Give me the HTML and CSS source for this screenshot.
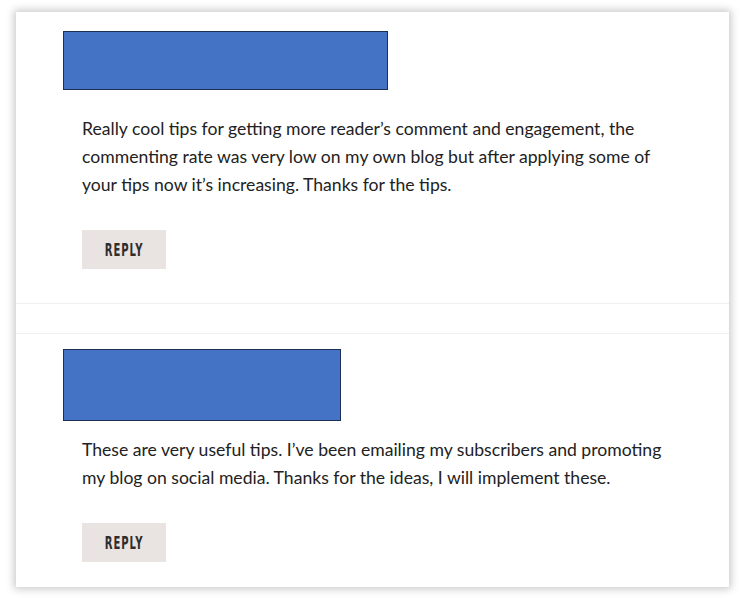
FILE: index.html
```html
<!DOCTYPE html>
<html>
<head>
<meta charset="utf-8">
<link rel="stylesheet" href="styles.css">
</head>
<body>
<div class="card">
  <div class="comment first">
    <div class="avatar-box wide"></div>
    <p class="text">Really cool tips for getting more reader’s comment and engagement, the commenting rate was very low on my own blog but after applying some of your tips now it’s increasing. Thanks for the tips.</p>
    <button class="reply"><span class="reply-label">REPLY</span></button>
  </div>
  <div class="spacer"></div>
  <div class="comment second">
    <div class="avatar-box narrow"></div>
    <p class="text">These are very useful tips. I’ve been emailing my subscribers and promoting my blog on social media. Thanks for the ideas, I will implement these.</p>
    <button class="reply"><span class="reply-label">REPLY</span></button>
  </div>
</div>
</body>
</html>
```
FILE: styles.css
```css
html, body {
  margin: 0;
  padding: 0;
  background: #ffffff;
}
body {
  padding: 12px 18px 11px 16px;
  font-family: Lato, "Open Sans", sans-serif;
}
.card {
  width: 713px;
  height: 575px;
  background: #fff;
  box-shadow: 0 0 8px 2px rgba(0,0,0,0.22);
  display: flex;
  flex-direction: column;
}
.comment {
  padding-left: 47px;
  display: flex;
  flex-direction: column;
  align-items: flex-start;
}
.comment.first {
  padding-top: 19px;
  padding-bottom: 34px;
  border-bottom: 1px solid #efefef;
}
.spacer {
  height: 29px;
  border-bottom: 1px solid #efefef;
}
.comment.second {
  padding-top: 15px;
}
.avatar-box {
  background: #4472c4;
  border: 1px solid #1c2f55;
  box-sizing: border-box;
}
.avatar-box.wide { width: 325px; height: 59px; }
.avatar-box.narrow { width: 278px; height: 72px; }
.text {
  margin: 0 0 0 19px;
  width: 586px;
  font-size: 17.6px;
  line-height: 28px;
  color: #222;
}
.first .text { margin-top: 25px; }
.second .text { margin-top: 15px; }
.reply {
  margin: 31px 0 0 19px;
  width: 84px;
  height: 39px;
  border: none;
  background: #e9e4e2;
  padding: 0;
  display: flex;
  align-items: center;
  justify-content: center;
}
.reply-label {
  display: inline-block;
  font-family: "DejaVu Sans Condensed", "DejaVu Sans", sans-serif;
  font-weight: bold;
  font-size: 18px;
  line-height: 18px;
  letter-spacing: 1.5px;
  color: #2e2e2e;
  transform: scaleX(0.62);
}
```
